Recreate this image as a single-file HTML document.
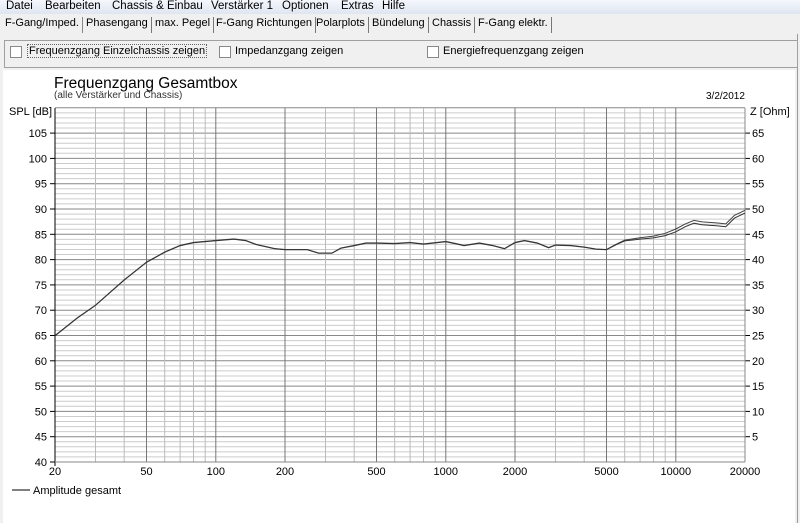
<!DOCTYPE html>
<html><head><meta charset="utf-8"><style>
body{margin:0;width:800px;height:523px;overflow:hidden;background:#f0f0f0;font-family:"Liberation Sans",Arial,sans-serif;font-size:11px;color:#000;position:relative}
.menu{position:absolute;left:0;top:0;width:800px;height:14px;background:linear-gradient(#f4f7fc,#dfe6f1);}
.menu span{position:absolute;top:0px;font-size:11.5px}
.tabs{position:absolute;top:15px;left:0;height:19px;width:800px}
.tabs span{position:absolute;top:2px;font-size:11px;border-right:1px solid #777;padding-right:3px;height:16px}
.panel{position:absolute;left:4px;top:40px;width:792px;height:26px;border:1px solid #a0a0a0;background:#f0f0f0}
.cb{position:absolute;top:46px;width:10px;height:10px;border:1px solid #888;background:#fff}
.lb{position:absolute;top:45px;font-size:11px}
.plot{position:absolute;left:3px;top:70px;width:792px;height:453px;background:#fff}
</style></head><body>
<div class="menu">
<span style="left:6px">Datei</span><span style="left:45px">Bearbeiten</span><span style="left:112px">Chassis &amp; Einbau</span><span style="left:211px">Verstärker 1</span><span style="left:282px">Optionen</span><span style="left:341px">Extras</span><span style="left:382px">Hilfe</span>
</div>
<div class="tabs">
<span style="left:5px;border-right:1px solid #888">F-Gang/Imped.</span>
<span style="left:86px">Phasengang</span>
<span style="left:155px">max. Pegel</span>
<span style="left:216px">F-Gang Richtungen</span>
<span style="left:316px">Polarplots</span>
<span style="left:372px">Bündelung</span>
<span style="left:432px">Chassis</span>
<span style="left:478px">F-Gang elektr.</span>
</div>
<div style="position:absolute;left:797px;top:34px;width:1px;height:489px;background:#999"></div>
<div class="panel"></div>
<div class="cb" style="left:10px"></div><div class="lb" style="left:27px;border:1px dotted #666;padding:0 1px;top:44px">Frequenzgang Einzelchassis zeigen</div>
<div class="cb" style="left:219px"></div><div class="lb" style="left:235px">Impedanzgang zeigen</div>
<div class="cb" style="left:427px"></div><div class="lb" style="left:443px">Energiefrequenzgang zeigen</div>
<div class="plot"></div>
<svg id="g" width="800" height="523" style="position:absolute;left:0;top:0" font-family="Liberation Sans,Arial,sans-serif" font-size="11"></svg>
<script>
var s='';
function X(f){return 55+230*Math.log10(f/20);}
function Y(d){return 462-(d-40)*5.06;}
s+='<text x="54" y="88" font-size="15.5">Frequenzgang Gesamtbox</text>';
s+='<text x="54" y="98" font-size="10" fill="#333">(alle Verstärker und Chassis)</text>';
s+='<text x="706" y="99" font-size="10">3/2/2012</text>';
s+='<text x="9" y="115" font-size="11">SPL [dB]</text>';
s+='<text x="750" y="115" font-size="11">Z [Ohm]</text>';
for(var d=40;d<=110;d++){var y=Y(d).toFixed(1);var m=d%5==0;
s+='<line x1="55" x2="745" y1="'+y+'" y2="'+y+'" stroke="'+(m?'#888':'#ccc')+'" stroke-width="1"/>';
if(m&&d<110){s+='<line x1="50" x2="55" y1="'+y+'" y2="'+y+'" stroke="#000"/>';
s+='<text x="47" y="'+(+y+4)+'" text-anchor="end">'+d+'</text>';
if(d>40){s+='<line x1="745" x2="750" y1="'+y+'" y2="'+y+'" stroke="#000"/><text x="752" y="'+(+y+4)+'">'+(d-40)+'</text>';}}}
var decs=[10,100,1000,10000];
for(var i=0;i<decs.length;i++)for(var k=1;k<10;k++){var f=decs[i]*k;if(f<20||f>20000)continue;var x=X(f).toFixed(1);
var maj=(k==1||k==2||k==5);
s+='<line x1="'+x+'" x2="'+x+'" y1="108" y2="462" stroke="'+(maj?'#777':'#bbb')+'"/>';
if(maj){s+='<text x="'+x+'" y="475" text-anchor="middle">'+f+'</text>';}}
s+='<line x1="55" x2="55" y1="108" y2="466" stroke="#000"/><line x1="745" x2="745" y1="108" y2="462" stroke="#888"/><line x1="55" x2="745" y1="462" y2="462" stroke="#888"/>';
var p=[[20,65],[25,68.5],[30,71],[40,76],[50,79.5],[60,81.5],[70,82.8],[80,83.4],[100,83.8],[120,84.1],[135,83.8],[150,83],[180,82.2],[200,82],[250,82],[280,81.3],[320,81.3],[350,82.3],[400,82.8],[450,83.3],[500,83.3],[600,83.2],[700,83.4],[800,83.1],[1000,83.6],[1100,83.2],[1200,82.8],[1400,83.3],[1600,82.8],[1800,82.2],[2000,83.4],[2200,83.8],[2500,83.3],[2800,82.4],[3000,82.9],[3500,82.8],[4000,82.5],[4500,82.1],[5000,82],[5500,83],[6000,83.8],[7000,84.2],[8000,84.5],[9000,85],[10000,85.8],[11000,86.8],[12000,87.5],[13000,87.2],[15000,87],[16500,86.8],[18000,88.5],[20000,89.5]];
var a='',b='';
for(var i=0;i<p.length;i++){var x=X(p[i][0]).toFixed(1);var y=Y(p[i][1]);var off=p[i][0]>=5000?Math.min(2.5,(p[i][0]-5000)/2000):0;
a+=(i?'L':'M')+x+','+(y-off/2).toFixed(1);b+=(i?'L':'M')+x+','+(y+off/2+0.3).toFixed(1);}
s+='<path d="'+a+'" fill="none" stroke="#444" stroke-width="1"/><path d="'+b+'" fill="none" stroke="#333" stroke-width="1"/>';
s+='<line x1="12" x2="30" y1="490" y2="490" stroke="#000"/><text x="33" y="494">Amplitude gesamt</text>';
document.getElementById('g').innerHTML=s;
</script>
</body></html>
